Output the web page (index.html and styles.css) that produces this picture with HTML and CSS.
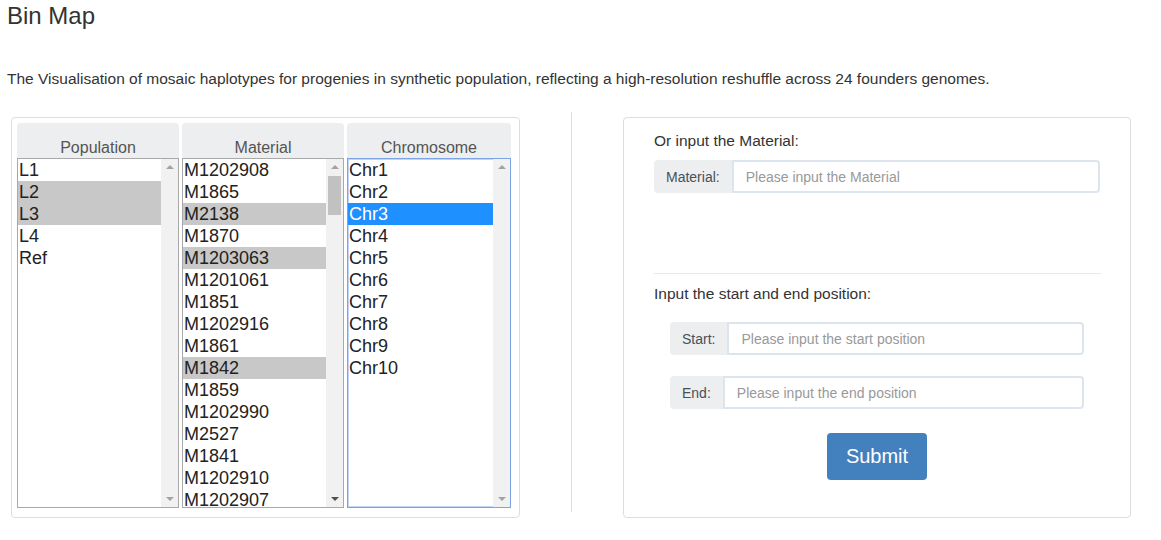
FILE: index.html
```html
<!DOCTYPE html>
<html>
<head>
<meta charset="utf-8">
<title>Bin Map</title>
<link rel="stylesheet" href="styles.css">
</head>
<body>
<h1 class="title">Bin Map</h1>
<p class="desc">The Visualisation of mosaic haplotypes for progenies in synthetic population, reflecting a high-resolution reshuffle across 24 founders genomes.</p>
<div class="row">
  <div class="panel left-panel">
    <div class="col">
      <div class="col-head">Population</div>
      <div class="listbox">
        <div class="items">
          <div class="item">L1</div>
          <div class="item sel">L2</div>
          <div class="item sel">L3</div>
          <div class="item">L4</div>
          <div class="item">Ref</div>
        </div>
        <div class="sbar">
          <span class="arrow up dim"></span>
          <span class="arrow down dim"></span>
        </div>
      </div>
    </div>
    <div class="col">
      <div class="col-head">Material</div>
      <div class="listbox">
        <div class="items">
          <div class="item">M1202908</div>
          <div class="item">M1865</div>
          <div class="item sel">M2138</div>
          <div class="item">M1870</div>
          <div class="item sel">M1203063</div>
          <div class="item">M1201061</div>
          <div class="item">M1851</div>
          <div class="item">M1202916</div>
          <div class="item">M1861</div>
          <div class="item sel">M1842</div>
          <div class="item">M1859</div>
          <div class="item">M1202990</div>
          <div class="item">M2527</div>
          <div class="item">M1841</div>
          <div class="item">M1202910</div>
          <div class="item">M1202907</div>
        </div>
        <div class="sbar">
          <span class="arrow up dim"></span>
          <span class="thumb"></span>
          <span class="arrow down"></span>
        </div>
      </div>
    </div>
    <div class="col">
      <div class="col-head">Chromosome</div>
      <div class="listbox focus">
        <div class="items">
          <div class="item">Chr1</div>
          <div class="item">Chr2</div>
          <div class="item active">Chr3</div>
          <div class="item">Chr4</div>
          <div class="item">Chr5</div>
          <div class="item">Chr6</div>
          <div class="item">Chr7</div>
          <div class="item">Chr8</div>
          <div class="item">Chr9</div>
          <div class="item">Chr10</div>
        </div>
        <div class="sbar">
          <span class="arrow up dim"></span>
          <span class="arrow down dim"></span>
        </div>
      </div>
    </div>
  </div>
  <div class="divider"></div>
  <div class="panel right-panel">
    <div class="label">Or input the Material:</div>
    <div class="igroup">
      <span class="addon">Material:</span>
      <input class="field" type="text" placeholder="Please input the Material">
    </div>
    <hr class="sep">
    <div class="label label2">Input the start and end position:</div>
    <div class="igroup inset">
      <span class="addon">Start:</span>
      <input class="field" type="text" placeholder="Please input the start position">
    </div>
    <div class="igroup inset gap">
      <span class="addon">End:</span>
      <input class="field" type="text" placeholder="Please input the end position">
    </div>
    <div class="actions">
      <button class="btn" type="button">Submit</button>
    </div>
  </div>
</div>
</body>
</html>
```
FILE: styles.css
```css
* { box-sizing: border-box; }
body {
  margin: 0;
  padding: 0 7px;
  font-family: "Liberation Sans", Arial, sans-serif;
  color: #333;
  background: #fff;
}
.title {
  margin: 0;
  font-size: 24px;
  line-height: 32px;
  font-weight: normal;
  color: #333;
}
.desc {
  margin: 36px 0 0;
  font-size: 15.5px;
  line-height: 22px;
  color: #333;
}
.row {
  display: flex;
  align-items: flex-start;
  margin-top: 22px;
}
.panel {
  border: 1px solid #ddd;
  border-radius: 4px;
  margin-top: 5px;
  background: #fff;
}
.left-panel {
  margin-left: 4px;
  width: 509px;
  height: 401px;
  padding: 5px 8px 8px 5px;
  display: grid;
  grid-template-columns: 162px 162px 164px;
  column-gap: 3px;
}
.col { display: flex; flex-direction: column; }
.col-head {
  height: 35px;
  padding-top: 15px;
  line-height: 20px;
  font-size: 16px;
  color: #555;
  text-align: center;
  background: #eceeef;
  border-radius: 4px 4px 0 0;
}
.listbox {
  height: 350px;
  border: 1px solid #a9a9a9;
  display: flex;
  overflow: hidden;
  background: #fff;
}
.listbox.focus {
  border-color: #7ba3e6;
  box-shadow: inset 0 0 0 1px #c3d5f3;
}
.items { flex: 1; min-width: 0; overflow: hidden; }
.item {
  height: 22px;
  line-height: 22px;
  font-size: 18px;
  color: #222;
  padding-left: 1px;
  white-space: nowrap;
}
.item.sel { background: #c8c8c8; }
.item.active { background: #1e90ff; color: #fff; }
.sbar {
  width: 17px;
  flex: none;
  background: #f1f1f1;
  display: flex;
  flex-direction: column;
  align-items: center;
  padding: 6px 0 6px;
}
.arrow {
  width: 0;
  height: 0;
  border-left: 4px solid transparent;
  border-right: 4px solid transparent;
}
.arrow.up { border-bottom: 4px solid #505050; }
.arrow.down { border-top: 4px solid #505050; margin-top: auto; }
.arrow.up.dim { border-bottom-color: #a3a3a3; }
.arrow.down.dim { border-top-color: #a3a3a3; }
.thumb {
  width: 13px;
  height: 39px;
  margin-top: 7px;
  background: #c1c1c1;
}
.divider {
  width: 1px;
  height: 400px;
  background: #ddd;
  margin-left: 51px;
  margin-right: 51px;
}
.right-panel {
  width: 508px;
  height: 401px;
  padding: 12px 30px 0;
  display: flex;
  flex-direction: column;
}
.label {
  font-size: 15.5px;
  line-height: 22px;
  color: #333;
}
.igroup {
  display: flex;
  height: 33px;
  margin-top: 8px;
}
.addon {
  display: flex;
  align-items: center;
  padding: 0 12px;
  background: #eceeef;
  border-radius: 4px 0 0 4px;
  font-size: 14px;
  color: #495057;
  flex: none;
}
.field {
  flex: 1;
  min-width: 0;
  height: 33px;
  border: 2px solid #dce4ed;
  border-radius: 0 4px 4px 0;
  padding: 0 12px;
  font-family: "Liberation Sans", Arial, sans-serif;
  font-size: 14px;
  color: #495057;
  outline: none;
}
.field::placeholder { color: #999; }
.sep {
  border: 0;
  border-top: 1px solid #e8e8e8;
  margin: 80px 0 0;
  width: 447px;
}
.label2 { margin-top: 9px; }
.inset { margin: 17px 16px 0; }
.inset.gap { margin-top: 21px; }
.actions {
  display: flex;
  justify-content: center;
  margin-top: 24px;
}
.btn {
  width: 100px;
  height: 47px;
  border: 0;
  border-radius: 4px;
  background: #4381be;
  color: #fff;
  font-family: "Liberation Sans", Arial, sans-serif;
  font-size: 20px;
}
```
